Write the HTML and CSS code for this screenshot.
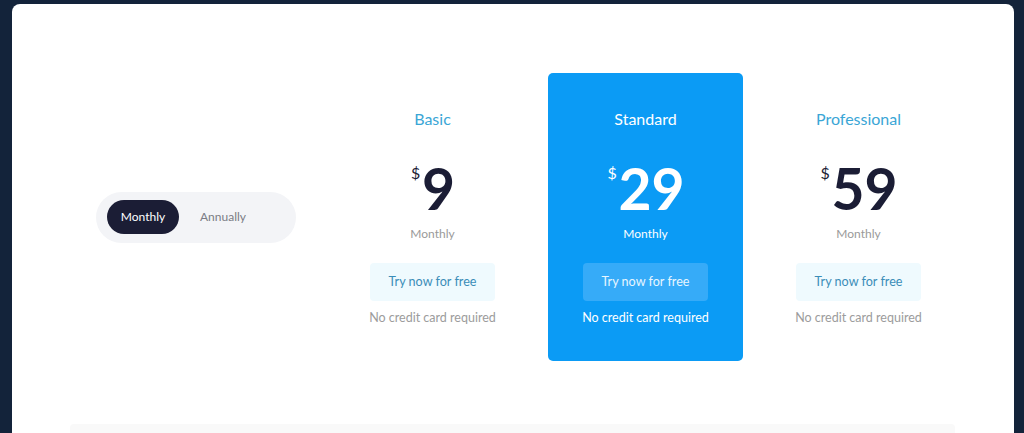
FILE: index.html
```html
<!DOCTYPE html>
<html lang="en">
<head>
<meta charset="utf-8">
<title>Pricing</title>
<link rel="stylesheet" href="styles.css">
</head>
<body>
<div class="panel">
  <div class="pricing">
    <div class="toggle">
      <span class="opt active">Monthly</span>
      <span class="opt">Annually</span>
    </div>
    <div class="plans">
      <div class="plan">
        <div class="name">Basic</div>
        <div class="price"><span class="cur">$</span>9</div>
        <div class="period">Monthly</div>
        <a class="btn">Try now for free</a>
        <div class="note">No credit card required</div>
      </div>
      <div class="plan featured">
        <div class="name">Standard</div>
        <div class="price"><span class="cur">$</span>29</div>
        <div class="period">Monthly</div>
        <a class="btn">Try now for free</a>
        <div class="note">No credit card required</div>
      </div>
      <div class="plan">
        <div class="name">Professional</div>
        <div class="price"><span class="cur">$</span>59</div>
        <div class="period">Monthly</div>
        <a class="btn">Try now for free</a>
        <div class="note">No credit card required</div>
      </div>
    </div>
  </div>
  <div class="strip"></div>
</div>
</body>
</html>
```
FILE: styles.css
```css
html, body {
  margin: 0;
  padding: 0;
  height: 100%;
  overflow: hidden;
}
body {
  background: #13233a;
  font-family: Lato, "Liberation Sans", sans-serif;
}
.panel {
  margin: 4px 10px 0 12px;
  background: #ffffff;
  border-radius: 8px 8px 0 0;
  min-height: 600px;
  padding-top: 69px;
}
.pricing {
  display: flex;
  align-items: center;
}
.toggle {
  margin-left: 84px;
  width: 200px;
  height: 51px;
  box-sizing: border-box;
  padding: 0 11px;
  border-radius: 26px;
  background: #f3f4f7;
  display: flex;
  align-items: center;
  font-size: 12px;
}
.opt {
  height: 34px;
  line-height: 34px;
  padding: 0 14px;
  border-radius: 17px;
  color: #7a7c85;
}
.opt.active {
  background: #1b1d35;
  color: #ffffff;
  width: 72px;
  box-sizing: border-box;
  text-align: center;
  padding: 0;
  margin-right: 7px;
}
.plans {
  margin-left: 39px;
  display: flex;
  gap: 18px;
}
.plan {
  width: 195px;
  box-sizing: border-box;
  padding: 36px 0 35px;
  display: flex;
  flex-direction: column;
  align-items: center;
  border-radius: 5px;
}
.name {
  font-size: 16px;
  line-height: 20px;
  color: #3aa6d6;
}
.price {
  margin-top: 31px;
  font-size: 57px;
  line-height: 56px;
  font-weight: 700;
  color: #1b1d35;
  position: relative;
  padding-left: 12px;
}
.cur {
  position: absolute;
  left: 1px;
  top: 5px;
  font-size: 16px;
  line-height: 16px;
  font-weight: 400;
}
.period {
  margin-top: 10px;
  font-size: 12px;
  line-height: 16px;
  color: #9a9a9a;
}
.btn {
  margin-top: 21px;
  width: 125px;
  height: 38px;
  line-height: 38px;
  text-align: center;
  border-radius: 4px;
  background: #effafe;
  color: #3b8db8;
  font-size: 12.6px;
}
.note {
  margin-top: 9px;
  font-size: 12.5px;
  line-height: 16px;
  color: #9c9c9c;
}
.featured {
  background: #0b9bf5;
}
.featured .name,
.featured .price,
.featured .period,
.featured .note {
  color: #ffffff;
}
.featured .btn {
  background: #36abf8;
  color: #e8f6ff;
}
.strip {
  margin: 63px 59px 0 58px;
  height: 60px;
  background: #f9f9f9;
  border-radius: 4px;
}
```
